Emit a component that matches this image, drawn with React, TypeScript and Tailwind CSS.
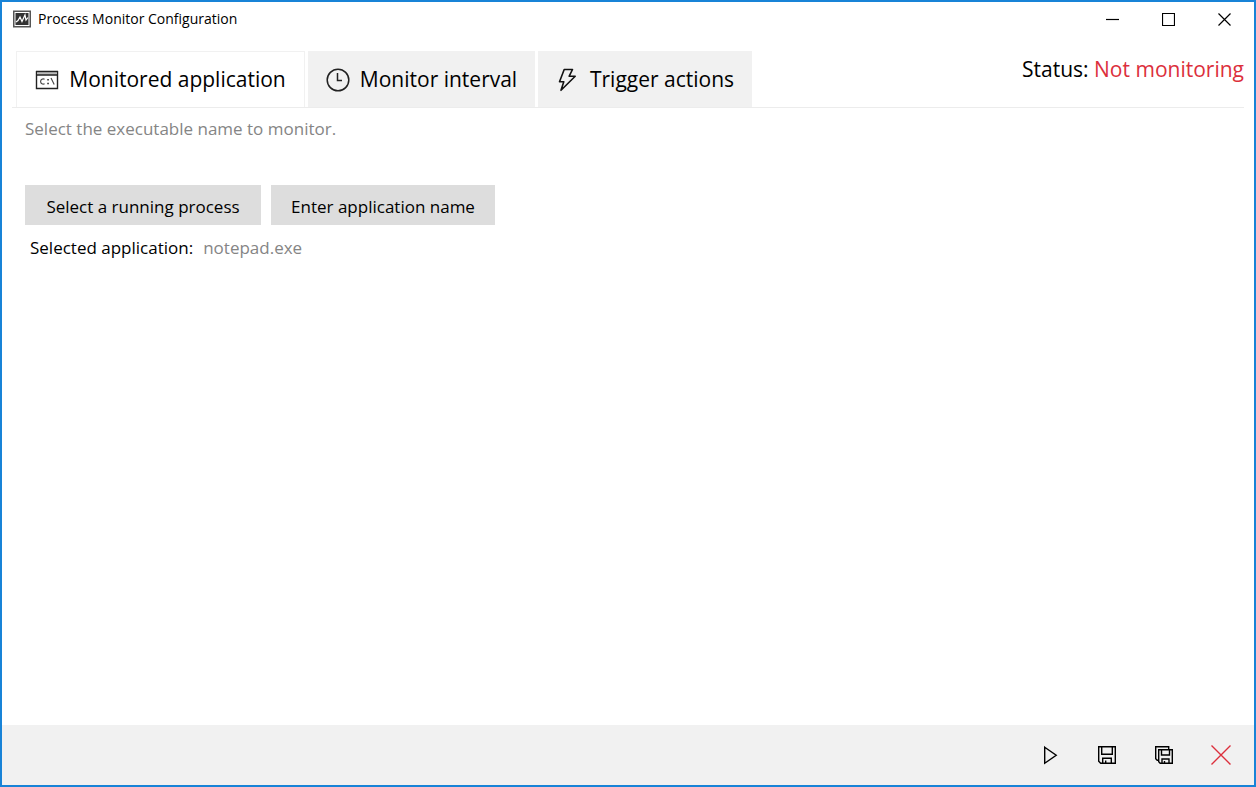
import { useState } from 'react';

const ConsoleIcon = () => (
  <svg width="24" height="20" viewBox="0 0 24 20" fill="none" stroke="#222" aria-hidden="true">
    <path d="M1.5 1v17.5h21V1" strokeWidth="1.4" />
    <path d="M2 3.5h20" stroke="#bbb" strokeWidth="2.6" />
    <path d="M1 1.5h22M1 5h22" strokeWidth="1.4" />
    <path d="M9.6 9.3c-1.8-1-4 .1-4 2.2s2.200 3.200 4 2.200M16 8l3.200 6.500" stroke="#444" strokeWidth="1.1" />
    <path d="M12.300 9.700h1.500M12.300 13.400h1.500" strokeWidth="1.500" />
  </svg>
);

const ClockIcon = () => (
  <svg width="24" height="24" viewBox="0 0 24 24" fill="none" stroke="#222" strokeWidth="1.500" aria-hidden="true">
    <circle cx="12" cy="12" r="10.800" />
    <path d="M11.500 5v7.500h4.500" />
  </svg>
);

const BoltIcon = () => (
  <svg width="24" height="24" viewBox="0 0 24 24" fill="none" stroke="#111" strokeWidth="1.600" strokeLinejoin="round" aria-hidden="true">
    <path d="M8.200 1.500h8.300l-3.300 6.700h6L5 22.300l2.800-8.600H3.500z" />
  </svg>
);

const AppIcon = () => (
  <svg width="18" height="18" viewBox="0 0 18 18" fill="none" aria-hidden="true">
    <rect x="0.75" y="1.25" width="16.5" height="15.5" stroke="#555" strokeWidth="1.5" />
    <rect x="2.5" y="3" width="13" height="12" fill="#333" />
    <path d="M3 12l2-1.5L7 7l2 4.500L12 5l1 5L15 7.500" stroke="#fff" strokeWidth="1.200" />
  </svg>
);

const windowButtons = [
  { label: 'Minimize', path: 'M0 7.5h13' },
  { label: 'Maximize', path: 'M.5 1.5h12v12H.5z' },
  { label: 'Close', path: 'M.5 1.5l12 12M12.5 1.5l-12 12' },
];

const tabs = [
  { label: 'Monitored application', icon: <ConsoleIcon />, width: 'w-[289px]' },
  { label: 'Monitor interval', icon: <ClockIcon />, width: 'w-[227px]' },
  { label: 'Trigger actions', icon: <BoltIcon />, width: 'w-[214px]' },
];

const footerButtons = [
  { label: 'Start monitoring', color: 'text-black', path: 'M4.7 2.2l11.5 8-11.5 8z' },
  {
    label: 'Save',
    color: 'text-black',
    path: 'M1.7 1.7h16.6v16.6H3.7l-2-2zM4.7 2v7.3h10.6V2M5.7 18v-4.8h8.6V18M8.7 18v-2.5',
  },
  {
    label: 'Save and close',
    color: 'text-black',
    path: 'M4.7 4.7h13.6v13.6H6.2l-1.5-1.5zM7.5 5v5h8V5M8 18v-4h7v4M10.5 18v-2M4.5 15.3H3.2l-1.5-1.5V1.7h13v3',
  },
  { label: 'Cancel', color: 'text-[#dc2f3c]', path: 'M.5.5l19 19M19.5.5l-19 19' },
];

const App: React.FC = () => {
  const [active, setActive] = useState(0);

  return (
    <div className="flex min-h-screen flex-col border-2 border-[#1883d7] bg-white font-['Open_Sans',sans-serif] text-black">
      <header className="flex h-[34px] items-center justify-between pr-0.5 pl-[11px]">
        <div className="flex items-center gap-[7px]">
          <AppIcon />
          <h1 className="text-sm">Process Monitor Configuration</h1>
        </div>
        <div className="flex h-full">
          {windowButtons.map((button) => (
            <button key={button.label} type="button" aria-label={button.label} className="flex w-14 items-center justify-center">
              <svg width="13" height="15" viewBox="0 0 13 15" fill="none" stroke="currentColor" strokeWidth="1.2">
                <path d={button.path} />
              </svg>
            </button>
          ))}
        </div>
      </header>

      <div className="mx-2.5 mt-[15px] flex justify-between border-b border-[#ececec] pl-1">
        <div role="tablist" className="flex gap-[3px]">
          {tabs.map((tab, index) => (
            <button
              key={tab.label}
              type="button"
              role="tab"
              aria-selected={active === index}
              onClick={() => setActive(index)}
              className={`flex h-14 items-center justify-center gap-2.5 whitespace-nowrap border border-b-0 border-[#f1f1f1] text-[21px] ${tab.width} ${
                active === index ? 'bg-white' : 'bg-[#f1f1f1]'
              }`}
            >
              {tab.icon}
              {tab.label}
            </button>
          ))}
        </div>
        <p className="text-[21px] leading-9 whitespace-nowrap">
          Status: <span className="text-[#dc2f3c]">Not monitoring</span>
        </p>
      </div>

      <main className="grow px-[23px] pt-[7px] text-[17px] leading-7">
        <p className="text-[#858585]">Select the executable name to monitor.</p>
        <div className="mt-[42px] flex gap-2.5">
          <button type="button" className="h-10 w-[236px] bg-[#dddddd] pt-1">
            Select a running process
          </button>
          <button type="button" className="h-10 w-[224px] bg-[#dddddd] pt-1">
            Enter application name
          </button>
        </div>
        <p className="mt-[9px] flex gap-2.5 pl-[5px]">
          <span>Selected application:</span>
          <span className="text-[#858585]">notepad.exe</span>
        </p>
      </main>

      <footer className="flex h-[60px] justify-end bg-[#f1f1f1] pr-[5px]">
        {footerButtons.map((button) => (
          <button
            key={button.label}
            type="button"
            aria-label={button.label}
            className={`flex w-[57px] items-center justify-center ${button.color}`}
          >
            <svg width="20" height="20" viewBox="0 0 20 20" fill="none" stroke="currentColor" strokeWidth="1.4">
              <path d={button.path} />
            </svg>
          </button>
        ))}
      </footer>
    </div>
  );
};

export default App;
